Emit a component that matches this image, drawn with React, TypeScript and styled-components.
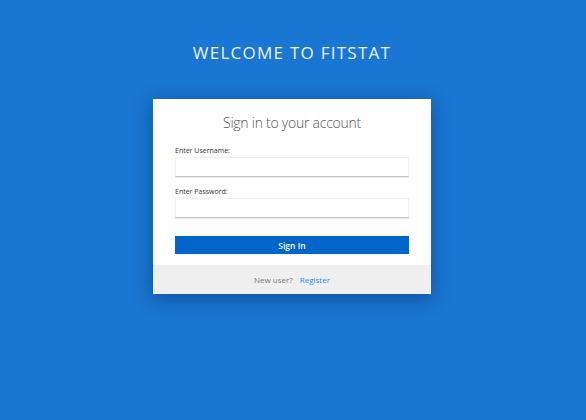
import React from "react";
import styled, { createGlobalStyle } from "styled-components";

const Global = createGlobalStyle`
  html, body { margin: 0; padding: 0; }
  body {
    background: #1976d2;
    font-family: "Open Sans", "Liberation Sans", sans-serif;
    min-height: 420px;
  }
`;

const Page = styled.div`
  display: flex;
  flex-direction: column;
  align-items: center;
  padding-top: 41px;
  padding-right: 2px;
`;

const Welcome = styled.h1`
  margin: 0;
  font-family: "Open Sans", sans-serif;
  font-weight: 400;
  font-size: 17px;
  line-height: 24px;
  letter-spacing: 1.25px;
  color: #eef3fa;
`;

const Card = styled.div`
  margin-top: 34px;
  width: 278px;
  background: #fff;
  box-shadow: 0 4px 18px rgba(0, 30, 80, 0.45);
  display: flex;
  flex-direction: column;
`;

const Body = styled.div`
  padding: 14px 22px 11px 22px;
  display: flex;
  flex-direction: column;
`;

const Title = styled.h2`
  margin: 0 0 13px 0;
  text-align: center;
  font-family: "Open Sans", sans-serif;
  font-weight: 300;
  font-size: 14px;
  letter-spacing: -0.25px;
  line-height: 20px;
  color: #555;
`;

const Label = styled.label`
  display: block;
  font-family: "Open Sans", sans-serif;
  font-size: 7px;
  line-height: 10px;
  color: #333;
  margin-bottom: 1px;
`;

const Input = styled.input<{ $last?: boolean }>`
  box-sizing: border-box;
  width: 100%;
  height: 20px;
  margin: 0 0 ${(p) => (p.$last ? 18 : 10)}px 0;
  border: 1px solid #f0f0f0;
  border-bottom: 1px solid #c4c4c4;
  box-shadow: 0 1px 1px rgba(0, 0, 0, 0.08);
  outline: none;
  background: #fff;
`;

const Button = styled.button`
  height: 18px;
  width: 100%;
  border: none;
  background: #0066cc;
  color: #fff;
  font-family: "Open Sans", sans-serif;
  font-weight: 600;
  font-size: 8.5px;
  padding: 0;
  cursor: pointer;
`;

const Footer = styled.div`
  height: 29px;
  background: #efefef;
  display: flex;
  align-items: center;
  justify-content: center;
  gap: 7px;
  font-family: "Open Sans", sans-serif;
  font-size: 8px;
`;

const Muted = styled.span`
  color: #777;
`;

const Link = styled.a`
  color: #2f86d4;
  text-decoration: none;
`;

export default function App() {
  return (
    <>
      <Global />
      <Page>
        <Welcome>WELCOME TO FITSTAT</Welcome>
        <Card>
          <Body>
            <Title>Sign in to your account</Title>
            <Label>Enter Username:</Label>
            <Input type="text" />
            <Label>Enter Password:</Label>
            <Input type="password" $last />
            <Button>Sign In</Button>
          </Body>
          <Footer>
            <Muted>New user?</Muted>
            <Link href="#">Register</Link>
          </Footer>
        </Card>
      </Page>
    </>
  );
}
